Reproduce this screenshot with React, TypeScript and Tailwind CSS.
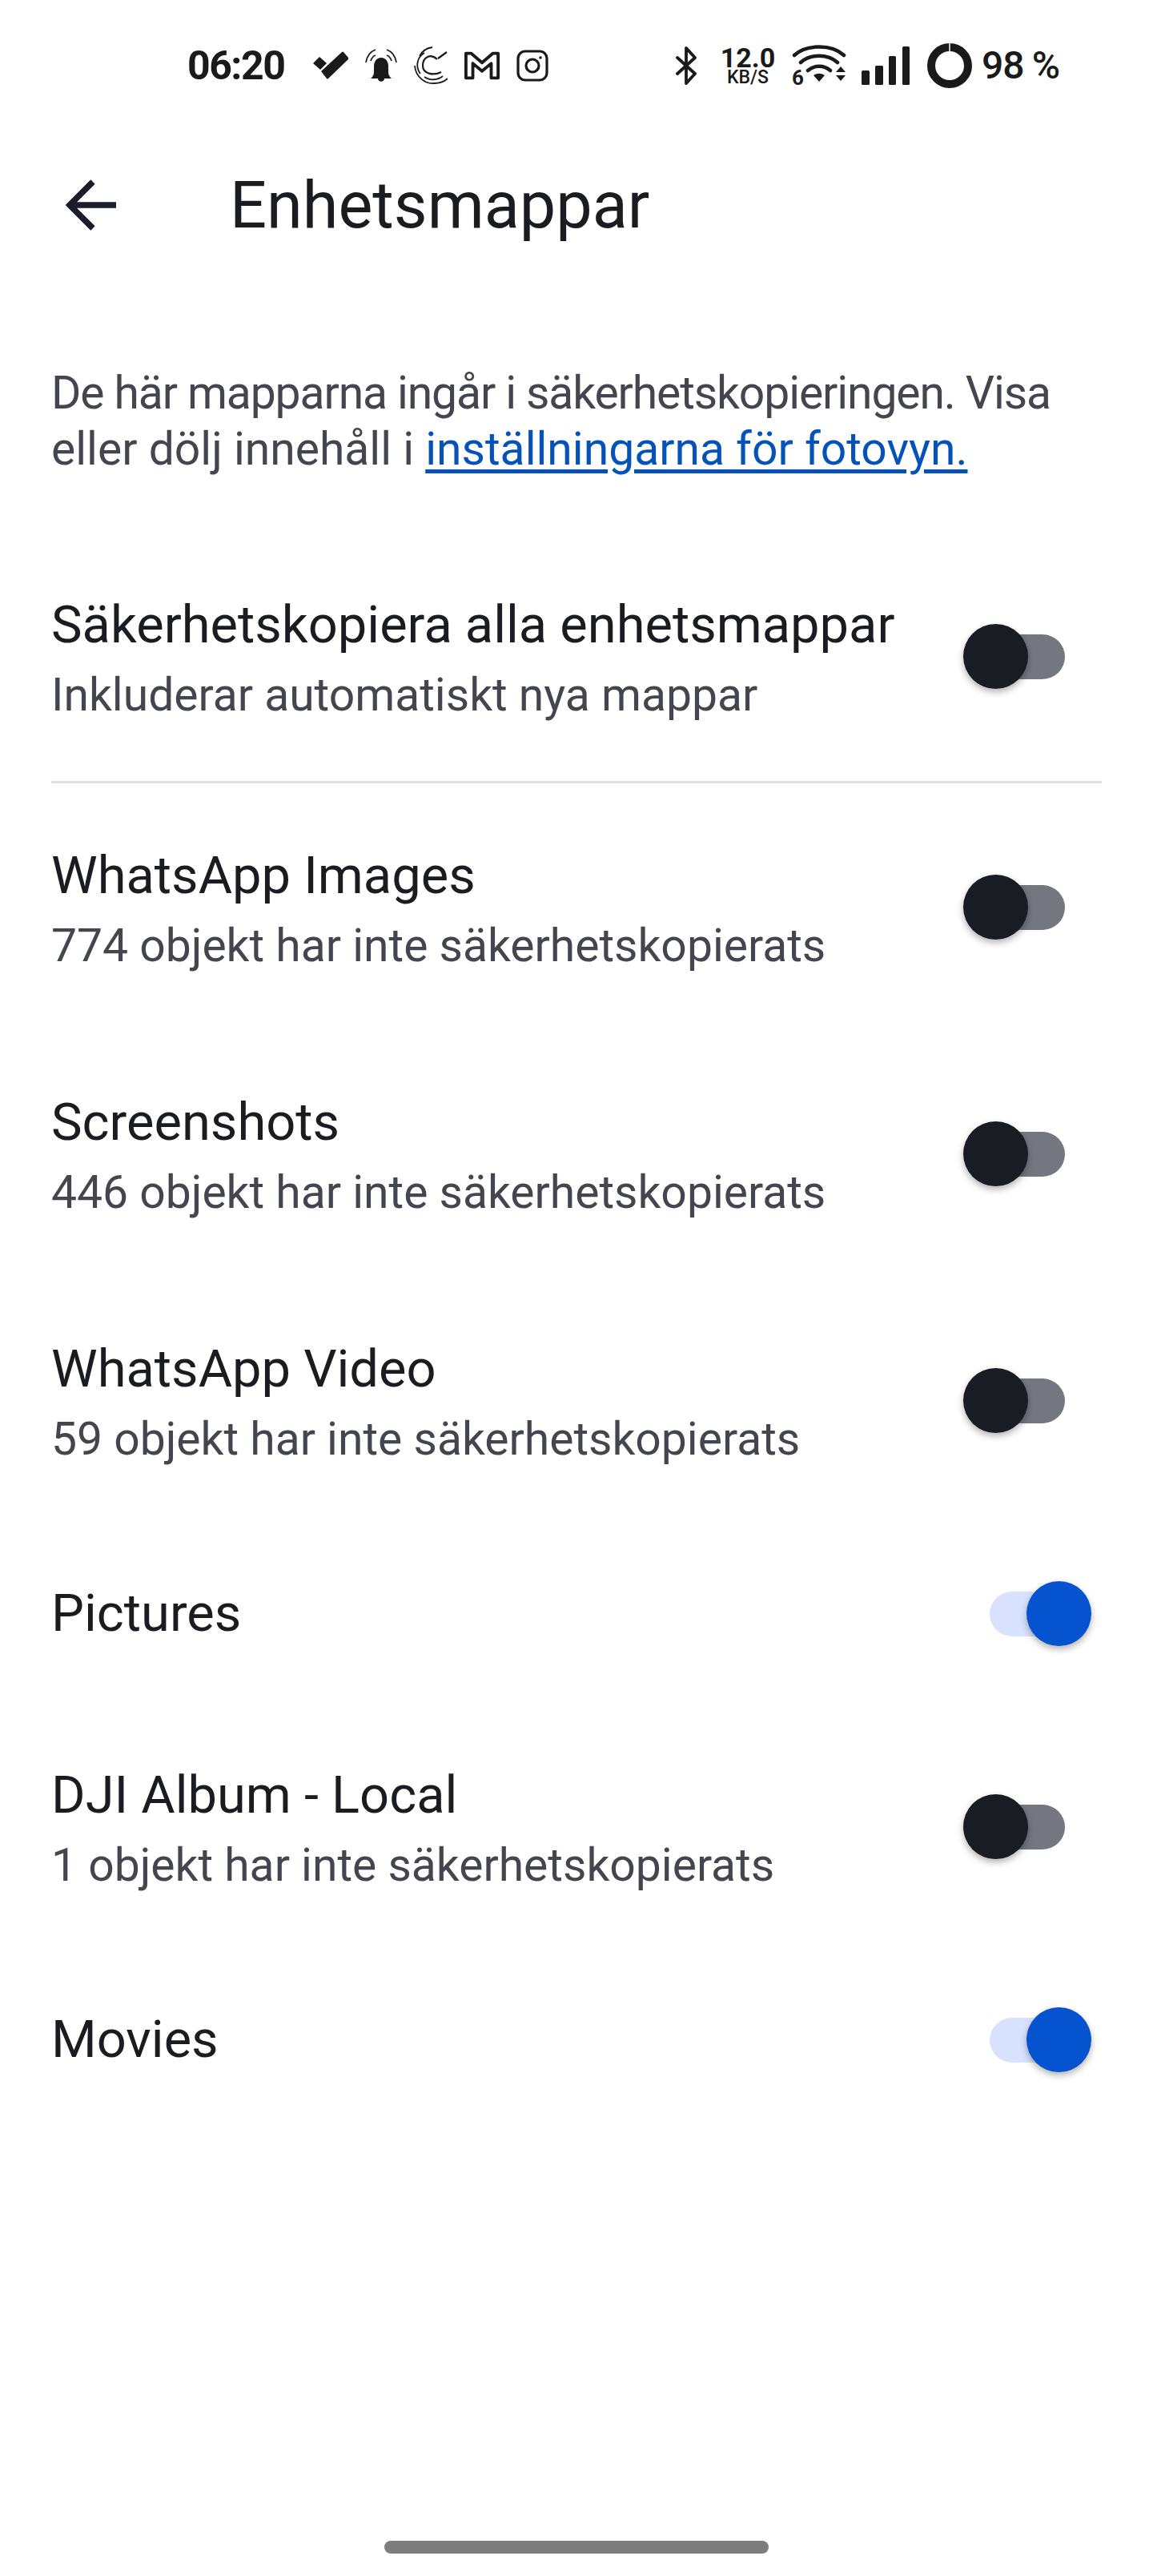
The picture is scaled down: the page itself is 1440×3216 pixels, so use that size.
const folders = [
  { name: 'WhatsApp Images', sub: '774 objekt har inte säkerhetskopierats', on: false, h: 'h-[308px]' },
  { name: 'Screenshots', sub: '446 objekt har inte säkerhetskopierats', on: false, h: 'h-[308px]' },
  { name: 'WhatsApp Video', sub: '59 objekt har inte säkerhetskopierats', on: false, h: 'h-[308px]' },
  { name: 'Pictures', sub: '', on: true, h: 'h-[224px]' },
  { name: 'DJI Album - Local', sub: '1 objekt har inte säkerhetskopierats', on: false, h: 'h-[308px]' },
  { name: 'Movies', sub: '', on: true, h: 'h-[224px]' },
];

function Toggle({ on }: { on: boolean }) {
  return (
    <div className="relative w-[160px] h-[81px] flex-shrink-0">
      <div className={`absolute left-[33px] top-[13px] w-[94px] h-[56px] rounded-full ${on ? 'bg-[#d8e2ff]' : 'bg-[#757780]'}`} />
      <div
        className={`absolute top-0 w-[81px] h-[81px] rounded-full shadow-[0_4px_8px_rgba(0,0,0,0.3)] ${on ? 'left-[79px] bg-[#0553cf]' : 'left-0 bg-[#1a1c24]'}`}
      />
    </div>
  );
}

function Row({ name, sub, on, h }: { name: string; sub: string; on: boolean; h: string }) {
  return (
    <div className={`flex items-center justify-between pl-[64px] pr-[77px] ${h}`}>
      <div className={sub ? 'pt-[10px]' : ''}>
        <div className="text-[65px] leading-[88px] text-[#1b1c21]">{name}</div>
        {sub && <div className="text-[57px] leading-[88px] text-[#44464f]">{sub}</div>}
      </div>
      <Toggle on={on} />
    </div>
  );
}

function LeftIcons() {
  return (
    <div className="flex items-center gap-[21px] ml-[36px]">
      <svg width="44" height="36" viewBox="0 0 44 36" fill="#1a1a1a">
        <path d="M0 15l8-8 9 8-8 8zM10 25L36 1q1-1 2 0l6 7q1 1 0 2L19 34q-1 1-2 0z" />
      </svg>
      <svg width="40" height="42" viewBox="0 0 40 42" fill="none" stroke="#1a1a1a" strokeWidth="1.8">
        <path d="M1 17C2 9 7 3 13 1M39 17C38 9 33 3 27 1M7 15c1-3 3-6 6-7M33 15c-1-3-3-6-6-7" />
        <path fill="#1a1a1a" stroke="none" d="M20 11c-6 0-9 5-9 11v7c0 4-2 6-4 8h26c-2-2-4-4-4-8v-7c0-6-3-11-9-11zM16 37h8c0 5-8 5-8 0z" />
      </svg>
      <svg width="42" height="48" viewBox="0 0 42 48" fill="none" stroke="#1a1a1a" strokeWidth="1.8">
        <path d="M29 16C20 8 11 14 11 24c0 10 13 13 23 8M30 15l11-8" strokeWidth="2.2" />
        <path d="M8 34C2 26 3 14 13 8M7 12c3-6 9-10 16-11M1 24c1 14 13 23 24 22 7 0 13-2 17-6M13 38c7 5 17 4 23-1" />
      </svg>
      <svg width="44" height="36" viewBox="0 0 46 36" fill="none" stroke="#1a1a1a" strokeWidth="4" strokeLinejoin="round">
        <path d="M2 2h7l14 12L37 2h7v32h-9V15L23 25 11 15v19H2z" />
      </svg>
      <svg width="40" height="40" viewBox="0 0 40 40" fill="none" stroke="#1a1a1a" strokeWidth="3.2">
        <rect x="2" y="2" width="36" height="36" rx="9" />
        <circle cx="20" cy="20" r="8" />
        <circle cx="30" cy="10" r="1.8" fill="#1a1a1a" stroke="none" />
      </svg>
    </div>
  );
}

function RightIcons() {
  return (
    <div className="flex items-center">
      <svg width="27" height="48" viewBox="0 0 27 48" fill="none" stroke="#1a1a1a" strokeWidth="3.8" strokeLinejoin="round" strokeLinecap="round">
        <path d="M2 14l22 20-11 12V2l11 12L2 34" />
      </svg>
      <div className="ml-[28px] w-[70px] flex flex-col items-center text-[#1a1a1a] font-bold">
        <span className="text-[34px] leading-[30px]">12.0</span>
        <span className="text-[23px] leading-[20px] font-medium whitespace-nowrap">KB/S</span>
      </div>
      <svg className="ml-[20px]" width="68" height="58" viewBox="0 -4 68 58" fill="none" stroke="#1a1a1a" strokeWidth="4.500" strokeLinecap="round">
        <path d="M3 12C18-2 50-2 65 12M11 21c12-11 34-11 46 0M20 31c8-7 20-7 28 0" />
        <path fill="#1a1a1a" stroke="none" d="M27 37c5-3 9-3 14 0l-7 8zM55 33l6-7 6 7zM55 37h12l-6 7z" />
        <text x="0" y="49" fontSize="26" fontWeight="700" fill="#1a1a1a" stroke="none" fontFamily="Roboto, sans-serif">6</text>
      </svg>
      <svg className="ml-[19px]" width="60" height="48" viewBox="0 0 60 48" fill="#1a1a1a">
        <rect x="0" y="30" width="10" height="18" rx="1.500" />
        <rect x="17" y="24" width="10" height="24" rx="1.500" />
        <rect x="34" y="12" width="9" height="36" rx="1.500" />
        <rect x="51" y="0" width="9" height="48" rx="1.500" />
      </svg>
      <svg className="ml-[22px]" width="56" height="56" viewBox="0 0 56 56" fill="none">
        <circle cx="28" cy="28" r="23" stroke="#1a1a1a" strokeWidth="10" />
        <rect x="27" y="0" width="2" height="10" fill="#c4c4c4" />
      </svg>
      <span className="ml-[12px] w-[97px] flex justify-between text-[48px] leading-[56px] text-[#1a1a1a] font-medium tracking-[-1px]">
        <span>98</span>
        <span>%</span>
      </span>
    </div>
  );
}

export default function App() {
  return (
    <div className="w-[1440px] h-[3216px] bg-white flex flex-col font-['Roboto',sans-serif] overflow-hidden">
      {/* Status bar */}
      <div className="h-[164px] flex items-center justify-between pl-[234px] pr-[117px]">
        <div className="flex items-center">
          <span className="text-[50px] font-bold text-[#1a1a1a] leading-none tracking-[-1.5px]">06:20</span>
          <LeftIcons />
        </div>
        <RightIcons />
      </div>

      {/* Header */}
      <div className="h-[184px] flex items-center pl-[81px]">
        <svg width="64" height="64" viewBox="0 0 64 64" fill="none" stroke="#1a1c2a" strokeWidth="7.500">
          <path d="M35 3L6 32l29 29M6 32h58" />
        </svg>
        <h1 className="ml-[142px] text-[81px] leading-none font-normal text-[#1b1c21]">Enhetsmappar</h1>
      </div>

      {/* Intro */}
      <p className="mt-[108px] px-[64px] text-[57px] leading-[70px] text-[#44464f] whitespace-nowrap">
        <span className="tracking-[-1.1px]">De här mapparna ingår i säkerhetskopieringen. Visa</span>
        <br />
        eller dölj innehåll i <span className="text-[#0553b8] underline underline-offset-[6px]">inställningarna för fotovyn.</span>
      </p>

      {/* All folders */}
      <div className="mt-[39px]">
        <Row name="Säkerhetskopiera alla enhetsmappar" sub="Inkluderar automatiskt nya mappar" on={false} h="h-[368px]" />
      </div>
      <div className="-mt-[28px] mx-[64px] h-[3px] bg-[#e0e0e2]" />

      {/* Folder list */}
      {folders.map((f) => (
        <Row key={f.name} name={f.name} sub={f.sub} on={f.on} h={f.h} />
      ))}

      {/* Gesture bar */}
      <div className="flex-1 flex items-end justify-center pb-[28px]">
        <div className="w-[480px] h-[16px] rounded-full bg-[#7d7d7d]" />
      </div>
    </div>
  );
}
